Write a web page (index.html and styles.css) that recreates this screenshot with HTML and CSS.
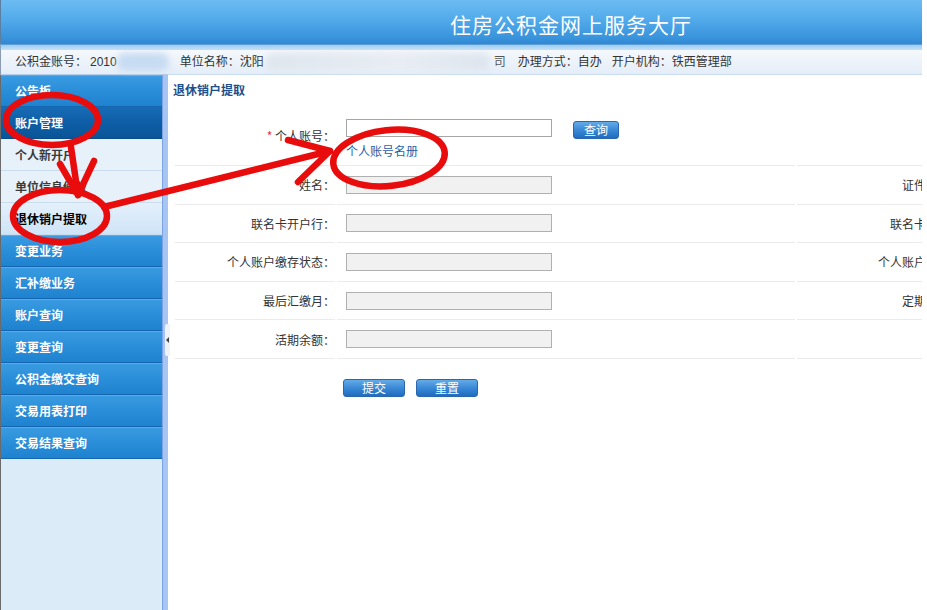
FILE: index.html
```html
<!DOCTYPE html>
<html lang="zh-CN">
<head>
<meta charset="utf-8">
<title>住房公积金网上服务大厅</title>
<link rel="stylesheet" href="styles.css">
</head>
<body>
<div class="frame">
  <div class="header"><div class="title">住房公积金网上服务大厅</div></div>
  <div class="strip"></div>
  <div class="infobar">
    <span class="f1">公积金账号：</span><span class="num">2010</span><span class="blur b1"></span>
    <span class="f2">单位名称：沈阳</span><span class="blur b2"></span><span class="f3">司</span>
    <span class="f4">办理方式：自办</span>
    <span class="f5">开户机构：铁西管理部</span>
  </div>
  <div class="body">
    <div class="sidebar">
      <div class="item">公告板</div>
      <div class="item open">账户管理</div>
      <div class="sub">个人新开户</div>
      <div class="sub">单位信息修改</div>
      <div class="sub active">退休销户提取</div>
      <div class="item">变更业务</div>
      <div class="item">汇补缴业务</div>
      <div class="item">账户查询</div>
      <div class="item">变更查询</div>
      <div class="item">公积金缴交查询</div>
      <div class="item">交易用表打印</div>
      <div class="item">交易结果查询</div>
    </div>
    <div class="splitter"><div class="tab"><span class="tri"></span></div></div>
    <div class="main">
      <div class="page-title">退休销户提取</div>
      <div class="form">
        <div class="cell label"><span class="star">*</span>&nbsp;个人账号：</div>
        <div class="cell value tall-v">
          <div class="acct"><input class="inp white" type="text"><button class="btn query">查询</button></div>
          <a class="link" href="#">个人账号名册</a>
        </div>
        <div class="cell label"></div>
        <div class="cell"></div>

        <div class="cell label">姓名：</div>
        <div class="cell value"><input class="inp" type="text" readonly></div>
        <div class="cell label r">证件号码：</div>
        <div class="cell"></div>

        <div class="cell label">联名卡开户行：</div>
        <div class="cell value"><input class="inp" type="text" readonly></div>
        <div class="cell label r">联名卡账号：</div>
        <div class="cell"></div>

        <div class="cell label">个人账户缴存状态：</div>
        <div class="cell value"><input class="inp" type="text" readonly></div>
        <div class="cell label r">个人账户状态：</div>
        <div class="cell"></div>

        <div class="cell label">最后汇缴月：</div>
        <div class="cell value"><input class="inp" type="text" readonly></div>
        <div class="cell label r">定期余额：</div>
        <div class="cell"></div>

        <div class="cell label">活期余额：</div>
        <div class="cell value"><input class="inp" type="text" readonly></div>
        <div class="cell label r"></div>
        <div class="cell"></div>
      </div>
      <div class="actions">
        <button class="btn wide">提交</button>
        <button class="btn wide">重置</button>
      </div>
    </div>
  </div>
  <svg class="marks" width="922" height="610" viewBox="0 0 922 610" aria-hidden="true">
    <g fill="none" stroke="#e80c0c" stroke-width="6.5" stroke-linecap="round" stroke-linejoin="round">
      <ellipse cx="52" cy="120" rx="46" ry="25"/>
      <ellipse cx="60" cy="216" rx="47" ry="26"/>
      <ellipse cx="389" cy="158" rx="56" ry="28" transform="rotate(-6 389 158)"/>
      <path d="M71 147 L78 195"/>
      <path d="M60 164 L78 195 L94 161"/>
      <path d="M104 207 L330 151"/>
      <path d="M288 140 L330 151 L298 182"/>
    </g>
  </svg>
</div>
</body>
</html>
```
FILE: styles.css
```css
html, body {
  margin: 0;
  padding: 0;
  background: #ffffff;
}
body {
  font-family: "Liberation Sans", "Noto Sans CJK SC", sans-serif;
  font-size: 12px;
  color: #333333;
}
.frame {
  position: relative;
  width: 922px;
  height: 610px;
  overflow: hidden;
  background: #ffffff;
}
.header {
  height: 44px;
  background: linear-gradient(#6cbcf2 0%, #52aaea 45%, #3a94dc 85%, #3088d2 100%);
  border-left: 1px solid #5a7fa0;
}
.title {
  padding-left: 449px;
  line-height: 48px;
  font-family: "Noto Sans CJK SC", sans-serif;
  font-size: 21px;
  letter-spacing: 1px;
  color: #ffffff;
  white-space: nowrap;
}
.strip {
  height: 5px;
  border-top: 1px solid #5c9dd6;
  border-left: 1px solid #8aa6c0;
  background: linear-gradient(#9dcdf2, #c4e0f6);
}
.infobar {
  height: 24px;
  line-height: 24px;
  border-bottom: 1px solid #b7cce6;
  border-left: 1px solid #8a9ab0;
  background: linear-gradient(#f5f8fc, #e4edf8);
  padding-left: 14px;
  white-space: nowrap;
  display: flex;
  align-items: center;
  color: #333333;
}
.num { margin-left: 3px; }
.blur {
  display: inline-block;
  flex-shrink: 0;
  height: 18px;
  border-radius: 8px;
  filter: blur(3px);
}
.b1 { width: 52px; background: #c7dcf2; }
.b2 { width: 224px; margin-left: 2px; background: linear-gradient(90deg, #dfe6ee, #e8edf3 60%, #dde5ee); }
.f2 { margin-left: 11px; }
.f3 { margin-left: 4px; color: #555; }
.f4 { margin-left: 12px; }
.f5 { margin-left: 10px; }

.body {
  display: flex;
  height: 535px;
  border-left: 1px solid #6a6a6a;
}
.sidebar {
  width: 161px;
  flex-shrink: 0;
  background: #dcebf8;
  display: flex;
  flex-direction: column;
}
.item, .sub {
  height: 31px;
  flex-shrink: 0;
  line-height: 31px;
  padding-left: 14px;
  font-family: "Noto Sans CJK SC", sans-serif;
  font-weight: bold;
  font-size: 12px;
  white-space: nowrap;
}
.item {
  color: #ffffff;
  background: linear-gradient(#3a9ce2, #2a8ed9 50%, #1f82cf);
  border-bottom: 1px solid #1466b0;
  box-shadow: inset 0 1px 0 #52aee8;
}
.item.open {
  background: linear-gradient(#176cb6, #0e5ea6 50%, #0a5598);
  box-shadow: none;
  border-bottom: 1px solid #0a4c8a;
}
.sub {
  color: #3a3a3a;
  background: #e6f1fa;
  border-bottom: 1px solid #c9dcee;
}
.sub.active {
  color: #000000;
  background: linear-gradient(#e4f0fb, #cfe4f7);
}
.splitter {
  width: 5px;
  flex-shrink: 0;
  background: #a7c5f3;
  border-left: 1px solid #7ba3e6;
  display: flex;
  flex-direction: column;
}
.tab {
  margin-top: 249px;
  margin-left: 2px;
  width: 5px;
  height: 32px;
  background: #eef3fa;
  border-radius: 2px 0 0 2px;
  display: flex;
  align-items: center;
  justify-content: center;
  position: relative;
  z-index: 1;
}
.tri {
  width: 0;
  height: 0;
  border-top: 3px solid transparent;
  border-bottom: 3px solid transparent;
  border-right: 3px solid #444444;
}
.main {
  flex: 1;
  min-width: 0;
  overflow: hidden;
  padding-left: 5px;
  border-top: 1px solid #c9dcf2;
  margin-top: -1px;
}
.page-title {
  height: 30px;
  line-height: 30px;
  font-family: "Noto Sans CJK SC", sans-serif;
  font-weight: bold;
  color: #1b4f8e;
}
.form {
  margin-left: 2px;
  display: grid;
  grid-template-columns: 160px 458px 170px 300px;
  grid-template-rows: 61px repeat(5, 38.6px);
  column-gap: 2px;
  width: 1094px;
}
.cell {
  box-sizing: border-box;
  border-bottom: 1px solid #ebebeb;
  display: flex;
  align-items: center;
  font-family: "Noto Sans CJK SC", sans-serif;
  white-space: nowrap;
}
.label {
  justify-content: flex-end;
  padding-right: 0;
  color: #333333;
}
.label.r { padding-right: 5px; }
.star { color: #e03a3a; }
.value { padding-left: 9px; }
.tall-v {
  flex-direction: column;
  align-items: flex-start;
  justify-content: flex-start;
  padding-top: 14px;
}
.acct {
  display: flex;
  align-items: flex-start;
}
.inp {
  box-sizing: border-box;
  width: 206px;
  height: 18px;
  margin: 0;
  padding: 0 3px;
  border: 1px solid #b0b0b0;
  background: #f1f1f1;
  font-size: 12px;
  outline: none;
}
.inp.white {
  background: #ffffff;
  border-color: #a6a6a6;
}
.btn {
  box-sizing: border-box;
  height: 18px;
  margin: 0;
  padding: 0;
  border: 1px solid #2a66ad;
  border-radius: 3px;
  background: linear-gradient(#63ace9, #3a88d6 50%, #1f6cc0);
  color: #ffffff;
  font-family: "Noto Sans CJK SC", sans-serif;
  font-size: 12px;
  line-height: 16px;
}
.query {
  width: 46px;
  margin-left: 21px;
  margin-top: 2px;
}
.link {
  margin-top: 5px;
  line-height: 14px;
  color: #1f5fa6;
  text-decoration: none;
}
.actions {
  margin-top: 20px;
  margin-left: 170px;
  display: flex;
  gap: 11px;
}
.wide { width: 62px; }
.marks {
  position: absolute;
  left: 0;
  top: 0;
  pointer-events: none;
}
```
